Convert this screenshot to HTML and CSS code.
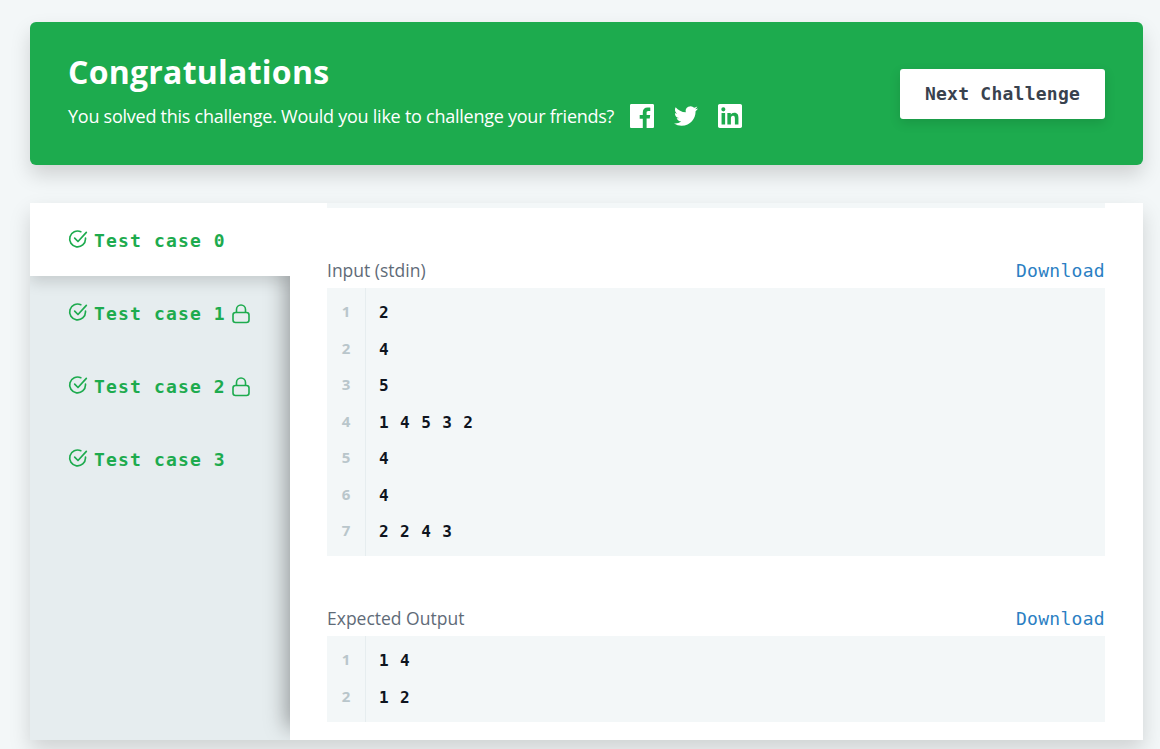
FILE: index.html
```html
<!DOCTYPE html>
<html lang="en">

<head>
    <meta charset="UTF-8" />
    <title>Congratulations</title>
    <link rel="stylesheet" href="styles.css">
</head>

<body>
    <section class="banner">
        <div class="banner-text">
            <h2>Congratulations</h2>
            <div class="share">
                <span>You solved this challenge. Would you like to challenge your friends?</span>
                <a class="share-icon first" href="#">
                    <svg viewBox="0 0 24 24" width="24" height="24"><path d="M22.7 0H1.3C.6 0 0 .6 0 1.3v21.4C0 23.4.6 24 1.3 24h11.5v-9.3H9.7v-3.6h3.1V8.4c0-3.1 1.9-4.8 4.7-4.8 1.3 0 2.5.1 2.8.1v3.2h-1.9c-1.5 0-1.8.7-1.8 1.8v2.3h3.6l-.5 3.6h-3.1V24h6.1c.7 0 1.3-.6 1.3-1.3V1.3C24 .6 23.4 0 22.7 0z"/></svg>
                </a>
                <a class="share-icon" href="#">
                    <svg viewBox="0 0 24 24" width="24" height="24"><path d="M23.95 4.57a10 10 0 0 1-2.82.77 4.96 4.96 0 0 0 2.16-2.72c-.95.55-2 .95-3.12 1.18a4.92 4.92 0 0 0-8.38 4.48C7.69 8.1 4.07 6.13 1.64 3.16a4.82 4.82 0 0 0-.66 2.47c0 1.71.87 3.21 2.19 4.1a4.9 4.9 0 0 1-2.23-.62v.06a4.92 4.92 0 0 0 3.95 4.83 5 5 0 0 1-2.21.08 4.94 4.94 0 0 0 4.6 3.42A9.87 9.87 0 0 1 0 19.54a14 14 0 0 0 7.56 2.21c9.05 0 14-7.5 14-13.98 0-.21 0-.42-.02-.63a9.94 9.94 0 0 0 2.46-2.55z"/></svg>
                </a>
                <a class="share-icon" href="#">
                    <svg viewBox="0 0 24 24" width="24" height="24"><path d="M20.447 20.452h-3.554v-5.569c0-1.328-.027-3.037-1.852-3.037-1.853 0-2.136 1.445-2.136 2.939v5.667H9.351V9h3.414v1.561h.046c.477-.9 1.637-1.85 3.37-1.85 3.601 0 4.267 2.37 4.267 5.455v6.286zM5.337 7.433a2.062 2.062 0 0 1-2.063-2.065 2.064 2.064 0 1 1 2.063 2.065zm1.782 13.019H3.555V9h3.564v11.452zM22.225 0H1.771C.792 0 0 .774 0 1.729v20.542C0 23.227.792 24 1.771 24h20.451C23.2 24 24 23.227 24 22.271V1.729C24 .774 23.2 0 22.222 0h.003z"/></svg>
                </a>
            </div>
        </div>
        <button class="next-btn" type="button">Next Challenge</button>
    </section>

    <section class="results">
        <ul class="tabs">
            <li class="tab active">
                <svg class="tab-icon" viewBox="0 0 24 24"><path d="M21 11v1a9.5 9.5 0 1 1-5.6-8.7"/><path d="M8 11l4 4L22 4"/></svg>
                <span>Test case 0</span>
            </li>
            <li class="tab">
                <svg class="tab-icon" viewBox="0 0 24 24"><path d="M21 11v1a9.5 9.5 0 1 1-5.6-8.7"/><path d="M8 11l4 4L22 4"/></svg>
                <span>Test case 1</span>
                <svg class="lock-icon" viewBox="0 0 18 20"><rect x="1" y="8.5" width="16" height="10" rx="2.5"/><path d="M4.5 8.5V5.5a4.5 4.5 0 0 1 9 0v3"/></svg>
            </li>
            <li class="tab">
                <svg class="tab-icon" viewBox="0 0 24 24"><path d="M21 11v1a9.5 9.5 0 1 1-5.6-8.7"/><path d="M8 11l4 4L22 4"/></svg>
                <span>Test case 2</span>
                <svg class="lock-icon" viewBox="0 0 18 20"><rect x="1" y="8.5" width="16" height="10" rx="2.5"/><path d="M4.5 8.5V5.5a4.5 4.5 0 0 1 9 0v3"/></svg>
            </li>
            <li class="tab">
                <svg class="tab-icon" viewBox="0 0 24 24"><path d="M21 11v1a9.5 9.5 0 1 1-5.6-8.7"/><path d="M8 11l4 4L22 4"/></svg>
                <span>Test case 3</span>
            </li>
        </ul>

        <div class="panel">
            <div class="prev-block"></div>

            <div class="block-head first">
                <span>Input (stdin)</span>
                <a href="#">Download</a>
            </div>
            <div class="code">
                <div class="gutter">
                    <div>1</div>
                    <div>2</div>
                    <div>3</div>
                    <div>4</div>
                    <div>5</div>
                    <div>6</div>
                    <div>7</div>
                </div>
                <div class="lines">
                    <div>2</div>
                    <div>4</div>
                    <div>5</div>
                    <div>1 4 5 3 2</div>
                    <div>4</div>
                    <div>4</div>
                    <div>2 2 4 3</div>
                </div>
            </div>

            <div class="block-head">
                <span>Expected Output</span>
                <a href="#">Download</a>
            </div>
            <div class="code">
                <div class="gutter">
                    <div>1</div>
                    <div>2</div>
                </div>
                <div class="lines">
                    <div>1 4</div>
                    <div>1 2</div>
                </div>
            </div>
        </div>
    </section>
</body>

</html>
```

FILE: styles.css
```css
body {
    font-family: "Open Sans", sans-serif;
    margin: 0;
    padding: 22px 17px 9px 30px;
    background: #f3f7f8;
    color: #39424e;
    overflow: hidden;
}

/* Green banner */
.banner {
    display: flex;
    align-items: center;
    justify-content: space-between;
    height: 143px;
    padding: 0 38px;
    box-sizing: border-box;
    background: #1dab4e;
    color: white;
    border-radius: 6px;
    box-shadow: 0 10px 20px rgba(0, 0, 0, 0.15);
}

.banner-text {
    padding-bottom: 9px;
}

.banner h2 {
    margin: 0 0 10px;
    font-size: 32px;
    line-height: 44px;
    font-weight: 700;
    letter-spacing: 0.25px;
}

.share {
    display: flex;
    align-items: center;
    height: 24px;
    font-size: 18px;
    letter-spacing: -0.25px;
}

.share-icon {
    display: flex;
    margin-left: 20px;
    color: white;
}

.share-icon.first {
    margin-left: 16px;
}

.share-icon svg {
    fill: currentColor;
}

.next-btn {
    width: 205px;
    height: 50px;
    background: white;
    color: #39424e;
    border: none;
    border-radius: 3px;
    font-family: "DejaVu Sans Mono", monospace;
    font-size: 18px;
    font-weight: 700;
    letter-spacing: 0.25px;
    box-shadow: 0 4px 12px rgba(0, 0, 0, 0.12);
}

/* Results card */
.results {
    display: flex;
    height: 537px;
    margin-top: 38px;
    background: white;
    overflow: hidden;
    box-shadow: 0 10px 20px rgba(0, 0, 0, 0.15);
}

.tabs {
    flex: 0 0 260px;
    margin: 0;
    padding: 0;
    list-style: none;
    background: #e6edef;
}

.tab {
    display: flex;
    align-items: center;
    height: 73px;
    padding: 2px 0 0 38px;
    box-sizing: border-box;
    color: #1dab4e;
    font-family: "DejaVu Sans Mono", monospace;
    font-size: 18px;
    font-weight: 700;
    letter-spacing: 1.15px;
}

/* clip-path keeps the shadow off the white panel on the right */
.tab.active {
    position: relative;
    z-index: 2;
    background: white;
    box-shadow: 0 6px 14px rgba(0, 0, 0, 0.14);
    clip-path: inset(0 0 -24px 0);
}

.tab-icon {
    width: 20px;
    height: 20px;
    margin: -4px 6px 0 0;
    fill: none;
    stroke: currentColor;
    stroke-width: 2;
    stroke-linecap: round;
    stroke-linejoin: round;
}

.lock-icon {
    width: 18px;
    height: 20px;
    margin-left: 6px;
    fill: none;
    stroke: currentColor;
    stroke-width: 1.6;
}

/* Right side with the input and output blocks */
.panel {
    position: relative;
    z-index: 1;
    flex: 1;
    padding: 0 38px 0 37px;
    background: white;
    box-shadow: -4px -12px 20px rgba(0, 0, 0, 0.35);
}

.prev-block {
    height: 5px;
    background: #f3f7f8;
}

.block-head {
    display: flex;
    align-items: center;
    justify-content: space-between;
    height: 24px;
    margin-bottom: 6px;
    color: #5f6b78;
    font-size: 17.5px;
}

.block-head.first {
    margin-top: 50px;
}

.block-head a {
    color: #2b7fc3;
    font-family: "DejaVu Sans Mono", monospace;
    font-size: 18px;
    letter-spacing: 0.3px;
    text-decoration: none;
}

.code {
    display: flex;
    background: #f3f7f8;
    font-weight: 700;
}

.code + .block-head {
    margin-top: 50px;
}

.gutter {
    flex: 0 0 38px;
    padding: 5px 0 7.5px;
    border-right: 1px solid #e6edef;
    color: #b9c6cb;
    font-size: 15px;
    text-align: center;
}

.lines {
    padding: 7px 0 5.5px 13px;
    color: #0e141e;
    font-family: "DejaVu Sans Mono", monospace;
    font-size: 16px;
    letter-spacing: 0.9px;
}

.gutter div,
.lines div {
    height: 36.5px;
    line-height: 36.5px;
}
```
